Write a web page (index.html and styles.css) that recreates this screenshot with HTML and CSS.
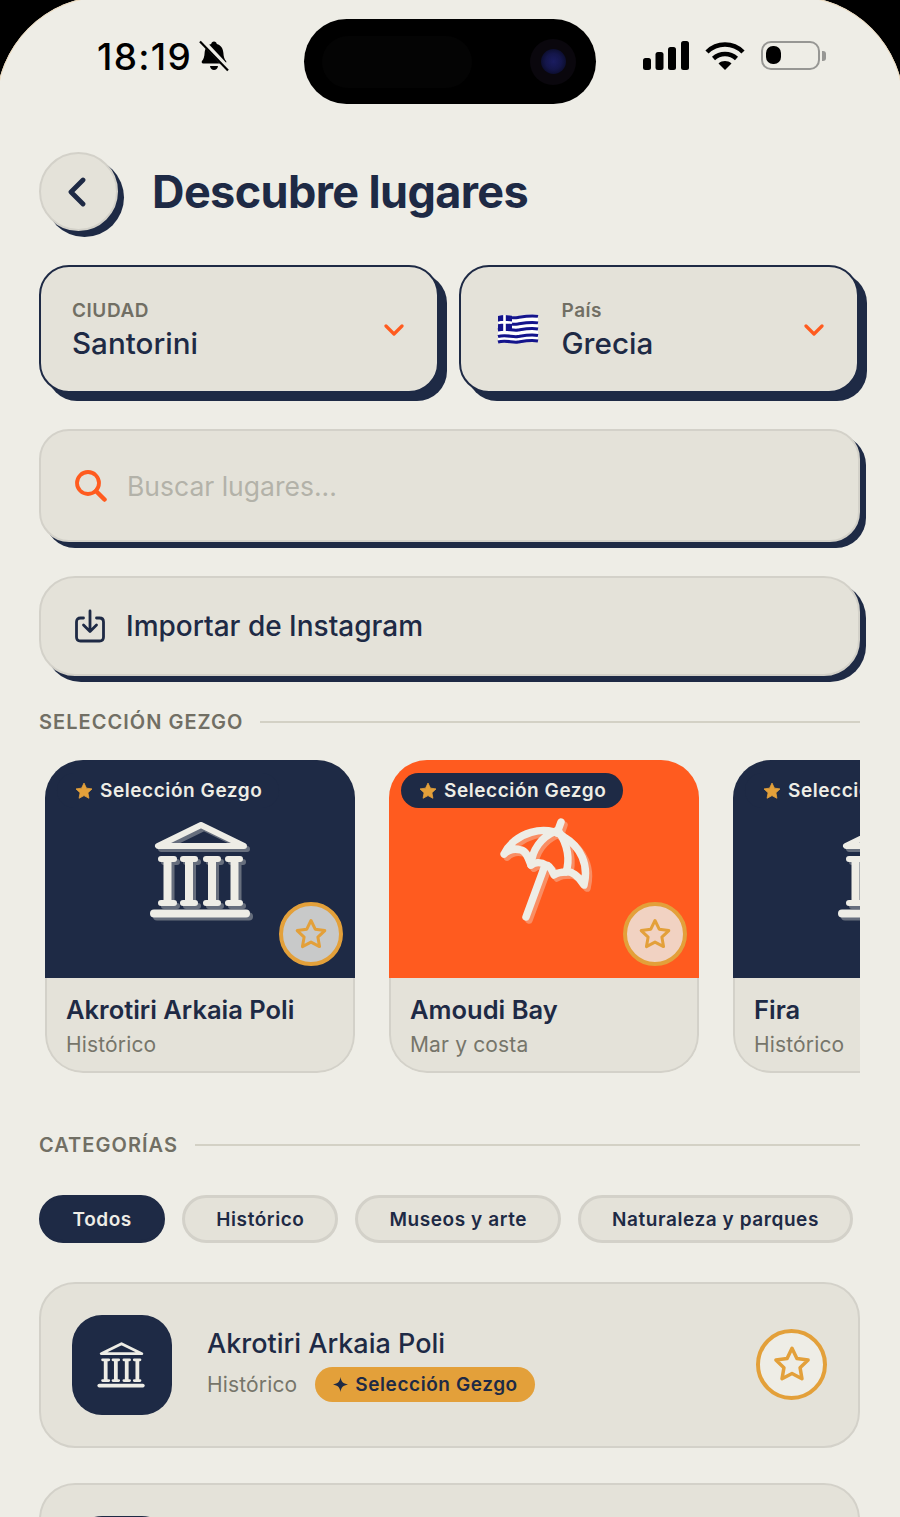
FILE: index.html
```html
<!DOCTYPE html>
<html lang="es">

<head>
    <meta charset="UTF-8">
    <meta name="viewport" content="width=device-width, initial-scale=1.0">
    <title>Descubre lugares</title>
    <link rel="stylesheet" href="styles.css">
</head>

<body>
    <!-- Shared icons -->
    <svg class="icon-defs" aria-hidden="true">
        <symbol id="temple" viewBox="0 0 110 110">
            <g fill="none" stroke="currentColor" stroke-linecap="round" stroke-linejoin="round">
                <path d="M54 10 11 31h86z" stroke-width="6" />
                <path d="M14 44h13M36 44h12M59 44h12M81 44h12M14 88h13M36 88h12M59 88h12M81 88h12" stroke-width="6" />
                <path d="M20.500 44v44M42 44v44M65 44v44M87.500 44v44" stroke-width="8" stroke-linecap="butt" />
                <path d="M7 98.500h92" stroke-width="8" />
            </g>
        </symbol>
        <symbol id="umbrella" viewBox="0 0 100 110">
            <g fill="none" stroke="currentColor" stroke-width="7.5" stroke-linecap="round" stroke-linejoin="round">
                <path d="M8 39C18 18 50 8 68 22c17 10 25 28 20 48-6-10-13-14-18-13-5 0-9 1-12 3-3-8-6-10-8-10-6-4-12-2-15 0-3-8-5-14-10-15-7-2-13 0-17 4z" />
                <path d="M35 50c1-15 10-28 25-34M70 57c4-12 2-27-7-40" />
                <path d="M65 7l-4 11M48 53 30 102" />
            </g>
        </symbol>
        <symbol id="star-outline" viewBox="0 0 24 24">
            <path d="M12 3l2.800 5.800 6.400.9-4.600 4.400 1.100 6.300-5.700-3-5.700 3 1.100-6.300-4.600-4.400 6.400-.9z" fill="none" stroke="currentColor" stroke-width="2" stroke-linejoin="round" />
        </symbol>
        <symbol id="star-solid" viewBox="0 0 24 24">
            <path d="M12 2.500l2.900 6.100 6.700.9-4.900 4.600 1.200 6.600-5.900-3.200-5.900 3.200 1.200-6.600-4.900-4.600 6.700-.9z" fill="currentColor" stroke="currentColor" stroke-linejoin="round" />
        </symbol>
        <symbol id="chevron" viewBox="0 0 20 12">
            <path d="M2 2l8 8 8-8" fill="none" stroke="currentColor" stroke-width="3.2" stroke-linecap="round" stroke-linejoin="round" />
        </symbol>
    </svg>

    <div class="page">
        <div class="screen-edge"></div>

        <!-- Status bar -->
        <div class="status-bar">
            <div class="status-left">
                <span class="clock">18:19</span>
                <svg class="bell" viewBox="0 0 30 32">
                    <path d="M15 1.500c1.600 0 2.600 1 2.800 2.400 4.200 1.200 6.400 4.600 6.600 9 .1 3 .9 6 2.600 8.200.8 1 .2 2.400-1.100 2.400H4.100c-1.300 0-1.900-1.400-1.100-2.400 1.700-2.200 2.500-5.200 2.600-8.200.2-4.400 2.400-7.800 6.600-9 .2-1.400 1.200-2.400 2.800-2.400z" fill="#000" />
                    <path d="M11 26h8c-.3 2.400-2 4-4 4s-3.700-1.600-4-4z" fill="#000" />
                    <path d="M2.500 0l27 29" stroke="#eeede6" stroke-width="5" />
                    <path d="M1 1.500l28 29" stroke="#000" stroke-width="2.200" />
                </svg>
            </div>
            <div class="island">
                <span class="island-sensor"></span>
                <span class="camera"><span class="camera-lens"></span></span>
            </div>
            <div class="status-right">
                <svg class="signal" viewBox="0 0 46 29">
                    <rect x="0" y="17" width="8" height="12" rx="2.500" />
                    <rect x="12.500" y="11" width="8" height="18" rx="2.500" />
                    <rect x="25" y="6" width="8" height="23" rx="2.500" />
                    <rect x="38" y="0" width="8" height="29" rx="2.500" />
                </svg>
                <svg class="wifi" viewBox="0 0 40 29">
                    <g fill="none" stroke="#000" stroke-width="4.500">
                        <path d="M2 11C12 1 28 1 38 11" />
                        <path d="M8.500 17.500c6.500-6 16.500-6 23 0" />
                    </g>
                    <path d="M13.500 22.500c3.800-3.200 9.200-3.200 13 0L20 29z" fill="#000" />
                </svg>
                <div class="battery">
                    <span class="battery-level"></span>
                </div>
                <span class="battery-nub"></span>
            </div>
        </div>

        <!-- Header -->
        <header class="page-header">
            <button class="back-btn" type="button">
                <svg viewBox="0 0 20 30">
                    <path d="M16 3 4 15l12 12" fill="none" stroke="currentColor" stroke-width="4.8" stroke-linecap="round" stroke-linejoin="round" />
                </svg>
            </button>
            <h1>Descubre lugares</h1>
        </header>

        <!-- City and country -->
        <div class="pickers">
            <div class="picker">
                <div class="picker-text">
                    <span class="picker-label">CIUDAD</span>
                    <span class="picker-value">Santorini</span>
                </div>
                <svg class="picker-arrow"><use href="#chevron" /></svg>
            </div>
            <div class="picker">
                <svg class="flag" viewBox="0 0 42 30">
                    <path d="M1 2c8-2.500 14 1 20 0s13-2.500 20-1v27c-7-1.500-14 0-20 1s-12-3.500-20-1z" fill="#fff" />
                    <g fill="none" stroke="#14148c" stroke-width="3">
                        <path d="M15 3.500c2 .4 4 .2 6-.1s13-2.500 20-1" />
                        <path d="M15 10c2 .4 4 .2 6-.1s13-2.500 20-1" />
                        <path d="M1 16c8-2.500 14 1 20 0s13-2.500 20-1" />
                        <path d="M1 22.500c8-2.500 14 1 20 0s13-2.500 20-1" />
                        <path d="M1 28c8-2.500 14 1 20 0s13-2.500 20-1" />
                    </g>
                    <path d="M1 2c5-1.600 9-1 14-.2V17c-5-.8-9-1.400-14 .2z" fill="#14148c" />
                    <path d="M7.500 1v16M1 9c5-1.600 9-1 14-.2" fill="none" stroke="#fff" stroke-width="2.600" />
                </svg>
                <div class="picker-text">
                    <span class="picker-label">País</span>
                    <span class="picker-value">Grecia</span>
                </div>
                <svg class="picker-arrow"><use href="#chevron" /></svg>
            </div>
        </div>

        <!-- Search -->
        <div class="search-box">
            <svg class="search-icon" viewBox="0 0 32 32">
                <circle cx="13" cy="13" r="11" fill="none" stroke="currentColor" stroke-width="3.800" />
                <path d="M21 21l8.500 8.500" stroke="currentColor" stroke-width="4.500" stroke-linecap="round" />
            </svg>
            <input type="text" placeholder="Buscar lugares...">
        </div>

        <!-- Import -->
        <button class="import-btn" type="button">
            <svg class="import-icon" viewBox="0 0 30 34">
                <path d="M8.500 9H5.500C3 9 1.500 10.500 1.500 13v15c0 2.500 1.500 4 4 4h19c2.500 0 4-1.500 4-4V13c0-2.500-1.500-4-4-4h-3" fill="none" stroke="currentColor" stroke-width="2.800" stroke-linecap="round" />
                <path d="M15 2v20M8.500 16l6.500 6.500 6.500-6.500" fill="none" stroke="currentColor" stroke-width="2.800" stroke-linecap="round" stroke-linejoin="round" />
            </svg>
            Importar de Instagram
        </button>

        <!-- Featured places -->
        <div class="section-title section-title-featured">
            <span>SELECCIÓN GEZGO</span>
        </div>
        <div class="carousel">
            <article class="place-card">
                <div class="place-cover cover-navy">
                    <span class="cover-badge"><svg><use href="#star-solid" /></svg>Selección Gezgo</span>
                    <svg class="cover-icon"><use href="#temple" /></svg>
                    <span class="cover-fav"><svg><use href="#star-outline" /></svg></span>
                </div>
                <div class="place-info">
                    <h3>Akrotiri Arkaia Poli</h3>
                    <p>Histórico</p>
                </div>
            </article>
            <article class="place-card">
                <div class="place-cover cover-orange">
                    <span class="cover-badge"><svg><use href="#star-solid" /></svg>Selección Gezgo</span>
                    <svg class="cover-icon cover-icon-umbrella"><use href="#umbrella" /></svg>
                    <span class="cover-fav"><svg><use href="#star-outline" /></svg></span>
                </div>
                <div class="place-info">
                    <h3>Amoudi Bay</h3>
                    <p>Mar y costa</p>
                </div>
            </article>
            <article class="place-card">
                <div class="place-cover cover-navy">
                    <span class="cover-badge"><svg><use href="#star-solid" /></svg>Selección Gezgo</span>
                    <svg class="cover-icon"><use href="#temple" /></svg>
                    <span class="cover-fav"><svg><use href="#star-outline" /></svg></span>
                </div>
                <div class="place-info">
                    <h3>Fira</h3>
                    <p>Histórico</p>
                </div>
            </article>
        </div>

        <!-- Categories -->
        <div class="section-title section-title-categories">
            <span>CATEGORÍAS</span>
        </div>
        <div class="chips">
            <span class="chip chip-active">Todos</span>
            <span class="chip">Histórico</span>
            <span class="chip">Museos y arte</span>
            <span class="chip">Naturaleza y parques</span>
        </div>

        <!-- Place list -->
        <div class="place-row">
            <div class="row-thumb">
                <svg><use href="#temple" /></svg>
            </div>
            <div class="row-text">
                <h3>Akrotiri Arkaia Poli</h3>
                <div class="row-meta">
                    <span class="row-category">Histórico</span>
                    <span class="row-tag">
                        <svg viewBox="0 0 24 24"><path d="M12 0c1.200 7.500 4 10.500 12 12-8 1.500-10.800 4.500-12 12-1.200-7.500-4-10.500-12-12 8-1.500 10.800-4.500 12-12z" fill="currentColor" /></svg>
                        Selección Gezgo
                    </span>
                </div>
            </div>
            <span class="row-fav"><svg><use href="#star-outline" /></svg></span>
        </div>
        <div class="place-row">
            <div class="row-thumb"></div>
        </div>
    </div>
</body>

</html>
```

FILE: styles.css
```css
* {
    box-sizing: border-box;
}

body {
    margin: 0;
    background-color: #eeede6;
    font-family: 'Inter', 'Liberation Sans', sans-serif;
    color: #1e2a45;
}

h1,
h3,
p {
    margin: 0;
}

.icon-defs {
    position: absolute;
    width: 0;
    height: 0;
}

.page {
    position: relative;
    width: 900px;
    height: 1517px;
    padding: 0 40px 0 39px;
    overflow: hidden;
    background-color: #eeede6;
}

/* Black device corners around the rounded screen */
.screen-edge {
    position: absolute;
    top: -4px;
    left: -4px;
    width: 908px;
    height: 1800px;
    border-radius: 110px;
    border: 1px solid #ecd9bb;
    box-shadow: 0 0 0 80px #000;
    pointer-events: none;
}

/* Status bar */
.status-bar {
    display: flex;
    align-items: flex-start;
    height: 152px;
    margin: 0 -40px 0 -39px;
    padding: 19px 74px 0 97px;
}

.status-left {
    display: flex;
    align-items: center;
    width: 207px;
    height: 74px;
}

.clock {
    font-size: 37px;
    font-weight: 500;
    letter-spacing: 1.3px;
    color: #000;
}

.bell {
    width: 30px;
    height: 32px;
    margin-left: 7px;
}

.island {
    position: relative;
    display: flex;
    align-items: center;
    justify-content: space-between;
    width: 292px;
    height: 85px;
    padding: 0 20px 0 18px;
    border-radius: 43px;
    background-color: #000;
}

.island-sensor {
    width: 150px;
    height: 52px;
    border-radius: 26px;
    background-color: #040404;
}

.camera {
    display: flex;
    align-items: center;
    justify-content: center;
    width: 46px;
    height: 46px;
    border-radius: 50%;
    background-color: #0a070d;
}

.camera-lens {
    width: 25px;
    height: 25px;
    border-radius: 50%;
    background: radial-gradient(circle at 50% 50%, #1a1c60 0, #14164a 45%, #0b0d2c 75%, #050510 100%);
}

.status-right {
    display: flex;
    align-items: flex-start;
    margin-left: 47px;
    padding-top: 22px;
}

.signal {
    width: 46px;
    height: 29px;
}

.wifi {
    width: 40px;
    height: 29px;
    margin-left: 16px;
}

.battery {
    width: 59px;
    height: 29px;
    margin-left: 16px;
    padding: 3px;
    border: 2.5px solid #979794;
    border-radius: 10px;
}

.battery-level {
    display: block;
    width: 15px;
    height: 18px;
    border-radius: 7px;
    background-color: #000;
}

.battery-nub {
    width: 4px;
    height: 10px;
    margin: 10px 0 0 2px;
    border-radius: 0 3px 3px 0;
    background-color: #979794;
}

/* Header */
.page-header {
    display: flex;
    align-items: center;
    height: 79px;
}

.back-btn {
    display: flex;
    align-items: center;
    justify-content: center;
    width: 79px;
    height: 79px;
    padding: 0 4px 0 0;
    color: #1e2a45;
    background-color: #e4e2d9;
    border: 2px solid #d3d1c9;
    border-radius: 50%;
    box-shadow: 6px 6px 0 #1e2a45;
}

.back-btn svg {
    width: 20px;
    height: 30px;
}

.page-header h1 {
    margin-left: 34px;
    font-size: 45px;
    font-weight: 700;
    letter-spacing: -0.62px;
    color: #1e2a45;
}

/* Pickers */
.pickers {
    display: grid;
    grid-template-columns: 400px 400px;
    gap: 19.5px;
    margin-top: 34px;
}

.picker {
    display: flex;
    align-items: center;
    height: 128px;
    padding: 0 33px 0 31px;
    background-color: #e4e2d9;
    border: 2.5px solid #1e2a45;
    border-radius: 30px;
    box-shadow: 8px 8px 0 #1e2a45;
}

.picker-text {
    display: flex;
    flex: 1;
    flex-direction: column;
    padding-top: 2px;
}

.picker-label {
    font-size: 19px;
    font-weight: 600;
    line-height: 24px;
    letter-spacing: 0.55px;
    color: #716f64;
}

.picker-value {
    margin-top: 1px;
    font-size: 29.6px;
    font-weight: 500;
    line-height: 38px;
    color: #1e2a45;
}

.picker-arrow {
    width: 20px;
    height: 12px;
    margin-top: 2px;
    color: #ff5b1f;
}

.flag {
    width: 42px;
    height: 30px;
    margin: 0 23px 0 5px;
}

/* Search */
.search-box {
    display: flex;
    align-items: center;
    height: 113px;
    margin-top: 36px;
    padding: 0 34px;
    background-color: #e4e2d9;
    border: 2px solid #d3d1c9;
    border-radius: 30px;
    box-shadow: 6px 6px 0 #1e2a45;
}

.search-icon {
    width: 32px;
    height: 32px;
    color: #ff5b1f;
}

.search-box input {
    flex: 1;
    margin-left: 20px;
    padding: 0;
    font-family: inherit;
    font-size: 26.5px;
    background: transparent;
    border: none;
    outline: none;
}

.search-box input::placeholder {
    color: #b3b2a9;
    opacity: 1;
}

/* Import button */
.import-btn {
    display: flex;
    align-items: center;
    width: 100%;
    height: 100px;
    margin-top: 34px;
    padding: 0 34px;
    font-family: inherit;
    font-size: 28px;
    font-weight: 500;
    color: #1e2a45;
    background-color: #e4e2d9;
    border: 2px solid #d3d1c9;
    border-radius: 36px;
    box-shadow: 6px 6px 0 #1e2a45;
}

.import-icon {
    width: 30px;
    height: 34px;
    margin-right: 21px;
}

/* Section titles */
.section-title {
    display: flex;
    align-items: center;
    gap: 17px;
    height: 24px;
    font-size: 20px;
    font-weight: 600;
    letter-spacing: 1.03px;
    color: #716f64;
}

.section-title::after {
    content: "";
    flex: 1;
    height: 2px;
    background-color: #d3d1c5;
}

.section-title-featured {
    margin-top: 34px;
}

.section-title-categories {
    margin-top: 60px;
}

/* Featured carousel */
.carousel {
    display: flex;
    gap: 34px;
    height: 313px;
    margin-top: 26px;
    padding-left: 6px;
    overflow: hidden;
}

.place-card {
    flex: 0 0 310px;
    overflow: hidden;
    background-color: #e4e2d9;
    border-radius: 38px;
}

.place-cover {
    position: relative;
    display: flex;
    justify-content: center;
    height: 218px;
    padding-top: 55px;
}

.cover-navy {
    background-color: #1e2a45;
}

.cover-orange {
    background-color: #ff5b1f;
}

.cover-badge {
    position: absolute;
    top: 13px;
    left: 12px;
    display: flex;
    align-items: center;
    height: 35px;
    padding: 0 17px;
    font-size: 19px;
    font-weight: 600;
    letter-spacing: 0.57px;
    white-space: nowrap;
    color: #eeede6;
    background-color: #1e2a45;
    border-radius: 18px;
}

.cover-badge svg {
    width: 20px;
    height: 20px;
    margin-right: 6px;
    color: #e3a03a;
}

.cover-icon {
    width: 110px;
    height: 110px;
    margin-left: 4px;
    color: #eeede6;
    filter: drop-shadow(3px 3px 0 rgba(238, 237, 230, 0.35));
}

.cover-icon-umbrella {
    width: 100px;
    margin-left: 3px;
}

.cover-fav {
    position: absolute;
    right: 12px;
    bottom: 12px;
    display: flex;
    align-items: center;
    justify-content: center;
    width: 64px;
    height: 64px;
    color: #e3a03a;
    background-color: rgba(238, 237, 230, 0.82);
    border: 4px solid #e3a03a;
    border-radius: 50%;
}

.cover-fav svg {
    width: 36px;
    height: 36px;
}

.place-info {
    height: 95px;
    padding: 15px 19px 0;
    border: 2px solid #d3d1c9;
    border-top: none;
    border-radius: 0 0 38px 38px;
}

.place-info h3 {
    font-size: 25.5px;
    font-weight: 600;
    line-height: 34px;
    color: #1e2a45;
}

.place-info p {
    margin-top: 4px;
    font-size: 21px;
    line-height: 28px;
    letter-spacing: 0.15px;
    color: #76756a;
}

/* Category chips */
.chips {
    display: flex;
    gap: 17px;
    margin-top: 38px;
}

.chip {
    display: flex;
    align-items: center;
    height: 48px;
    padding: 0 31px;
    font-size: 19px;
    font-weight: 600;
    letter-spacing: 0.57px;
    white-space: nowrap;
    color: #1e2a45;
    background-color: #e4e2d9;
    border: 3px solid #d3d1c9;
    border-radius: 24px;
}

.chip-active {
    padding: 0 30.5px;
    color: #eeede6;
    background-color: #1e2a45;
    border-color: #1e2a45;
}

/* List rows */
.place-row {
    display: flex;
    align-items: center;
    width: 821px;
    height: 166px;
    margin-top: 35px;
    padding: 0 31px;
    background-color: #e4e2d9;
    border: 2px solid #d3d1c9;
    border-radius: 36px;
}

.chips + .place-row {
    margin-top: 39px;
}

.row-thumb {
    display: flex;
    flex: none;
    align-items: center;
    justify-content: center;
    width: 100px;
    height: 100px;
    color: #eeede6;
    background-color: #1e2a45;
    border-radius: 30px;
}

.row-thumb svg {
    width: 52px;
    height: 52px;
}

.row-text {
    flex: 1;
    margin: 0 0 2px 35px;
}

.row-text h3 {
    font-size: 27px;
    font-weight: 500;
    line-height: 36px;
    color: #1e2a45;
}

.row-meta {
    display: flex;
    align-items: center;
    margin-top: 5px;
}

.row-category {
    font-size: 21px;
    letter-spacing: 0.15px;
    color: #76756a;
}

.row-tag {
    display: flex;
    align-items: center;
    height: 35px;
    margin-left: 18px;
    padding: 0 17px 0 18px;
    font-size: 19px;
    font-weight: 600;
    letter-spacing: 0.57px;
    color: #1e2a45;
    background-color: #e3a03a;
    border-radius: 18px;
}

.row-tag svg {
    width: 15px;
    height: 15px;
    margin-right: 7px;
}

.row-fav {
    display: flex;
    align-items: center;
    justify-content: center;
    width: 71px;
    height: 71px;
    margin-bottom: 2px;
    color: #e3a03a;
    background-color: #eeede6;
    border: 4px solid #e3a03a;
    border-radius: 50%;
}

.row-fav svg {
    width: 42px;
    height: 42px;
}
```
